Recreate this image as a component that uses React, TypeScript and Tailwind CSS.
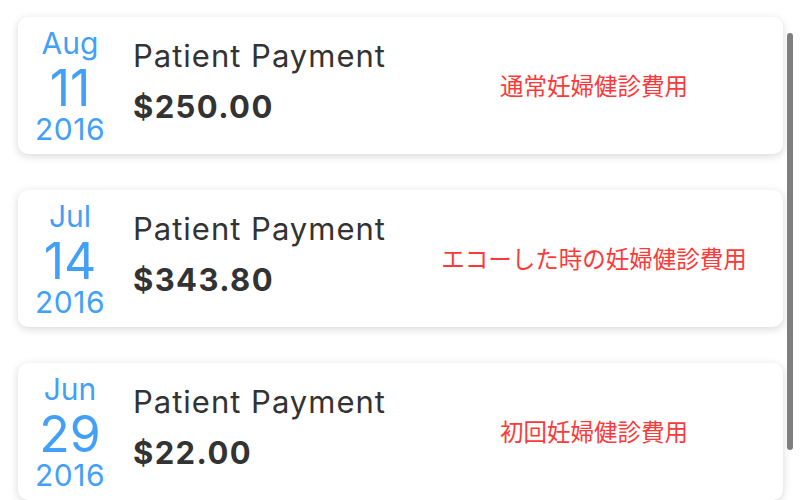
import React from 'react';

interface Payment {
  month: string;
  day: string;
  year: string;
  title: string;
  amount: string;
  note: string;
}

const PAYMENTS: Payment[] = [
  { month: 'Aug', day: '11', year: '2016', title: 'Patient Payment', amount: '$250.00', note: '通常妊婦健診費用' },
  { month: 'Jul', day: '14', year: '2016', title: 'Patient Payment', amount: '$343.80', note: 'エコーした時の妊婦健診費用' },
  { month: 'Jun', day: '29', year: '2016', title: 'Patient Payment', amount: '$22.00', note: '初回妊婦健診費用' },
];

function PaymentCard({ p }: { p: Payment }) {
  return (
    <div className="flex h-[137px] shrink-0 items-stretch rounded-[10px] bg-white shadow-[0_2px_8px_rgba(0,0,0,0.16)]">
      <div className="flex w-[104px] shrink-0 flex-col items-center pt-[5px] text-[#43a0f7] font-['Inter',sans-serif]">
        <span className="text-[30px] leading-[43px]">{p.month}</span>
        <span className="text-[50px] leading-[46px]">{p.day}</span>
        <span className="mt-[2px] text-[30px] leading-[33px] tracking-[0.5px]">{p.year}</span>
      </div>
      <div className="ml-[11px] flex w-[272px] shrink-0 flex-col pt-[13px] text-[#333333] font-['Inter',sans-serif]">
        <span className="text-[31px] leading-[51px] tracking-[1px]">{p.title}</span>
        <span className="text-[31px] font-bold leading-[51px] tracking-[1.4px]">{p.amount}</span>
      </div>
      <div className="flex flex-1 items-center justify-center text-[23.5px] text-[#fc3a3a] font-['Noto_Sans_CJK_JP',sans-serif]">
        {p.note}
      </div>
    </div>
  );
}

export default function App() {
  return (
    <div className="relative h-[500px] w-[800px] overflow-hidden bg-white">
      <div className="flex flex-col gap-[36px] pl-[18px] pr-[17px] pt-[17px]">
        {PAYMENTS.map((p, i) => (
          <PaymentCard key={i} p={p} />
        ))}
      </div>
      <div className="absolute left-[787px] top-[33px] h-[417px] w-[6px] rounded-full bg-[#7f7f7f]" />
    </div>
  );
}
